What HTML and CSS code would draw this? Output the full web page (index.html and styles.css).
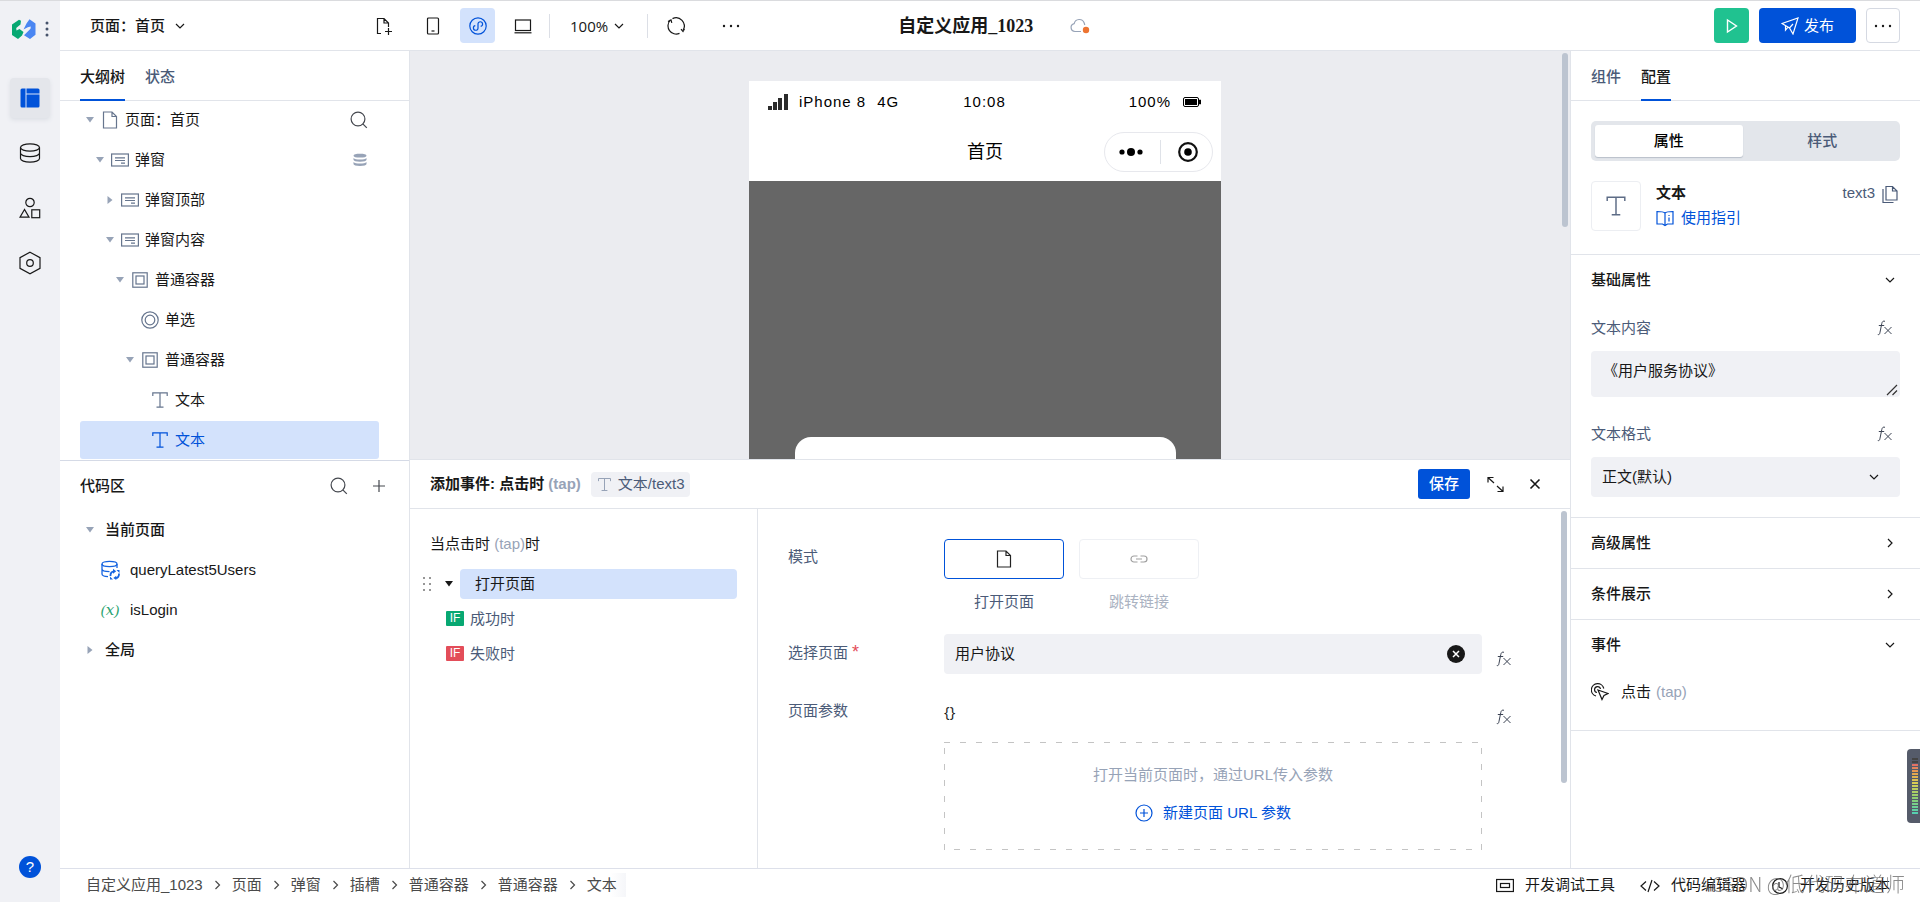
FILE: index.html
```
<!DOCTYPE html>
<html lang="zh-CN">
<head>
<meta charset="utf-8">
<title>自定义应用_1023</title>
<link rel="stylesheet" href="styles.css">
</head>
<body>
<svg class="sprite" aria-hidden="true">
  <symbol id="chev-down" viewBox="0 0 10 10"><path d="M1 3l4 4 4-4"/></symbol>
  <symbol id="chev-right" viewBox="0 0 10 10"><path d="M3 1l4 4-4 4"/></symbol>
  <symbol id="tri-down" viewBox="0 0 8 8"><path class="solid" d="M0 1h8L4 6.500z"/></symbol>
  <symbol id="tri-right" viewBox="0 0 8 8"><path class="solid" d="M1.500 0v8L6.500 4z"/></symbol>
  <symbol id="page" viewBox="0 0 18 18"><path d="M2.500 1h8.500l4.500 4.500V17h-13zM11 1v4.500h4.500"/></symbol>
  <symbol id="page-plus" viewBox="0 0 18 18"><path d="M6 16.500H2.500V1.500h6.500l4.500 4.500v4M9 1.500V6h4.500M10 14.500h7M13.500 11v7"/></symbol>
  <symbol id="search" viewBox="0 0 18 18"><circle cx="8" cy="8" r="6.900"/><path d="M12.800 12.800l4 4"/></symbol>
  <symbol id="panel" viewBox="0 0 18 18"><rect x=".6" y="3" width="16.800" height="12"/><path d="M4 6.800h10M4 9.500h10M10 12.200h4"/></symbol>
  <symbol id="box" viewBox="0 0 18 18"><rect x="1.800" y="1.800" width="14.400" height="14.400"/><rect x="5" y="5" width="8" height="8"/></symbol>
  <symbol id="radio" viewBox="0 0 18 18"><circle cx="9" cy="9" r="8.200"/><circle cx="9" cy="9" r="4.800"/></symbol>
  <symbol id="text" viewBox="0 0 18 18"><path d="M1.800 5V1.800h14.400V5M9 1.800v14.400M5.500 16.200h7"/></symbol>
  <symbol id="stack" viewBox="0 0 14 14"><path class="solid" d="M.5 2.700C.5 1.400 3 .8 7 .8s6.500.6 6.500 1.900S11 4.600 7 4.600.5 4 .5 2.700zM.5 5c1 1.100 3.300 1.500 6.500 1.500S12.500 6.100 13.500 5v1.800c0 1.300-2.500 2-6.500 2s-6.500-.7-6.500-2zM.5 9.100c1 1.100 3.300 1.500 6.500 1.500s5.500-.4 6.500-1.500V11c0 1.300-2.500 2-6.500 2s-6.500-.7-6.500-2z"/></symbol>
  <symbol id="dots" viewBox="0 0 18 18"><g class="solid"><circle cx="2" cy="9" r="1.200"/><circle cx="9" cy="9" r="1.200"/><circle cx="16" cy="9" r="1.200"/></g></symbol>
  <symbol id="fx" viewBox="0 0 16 16"><path d="M8 1.300c-1.800-.7-2.800.3-3.200 2.200L2.900 12.800c-.3 1.500-.9 2.100-2.100 1.700M1.800 5.500h5.400M7.500 7l7 7M14.500 7l-7 7"/></symbol>
</svg>
<div class="app">
  <nav class="rail" aria-label="主导航">
    <div class="brand">
      <svg width="24" height="20" viewBox="0 0 24 20"><path fill="#07a872" d="M0 5.500L7 .8l2 1-.5 3.700L4.200 9l.3 2.500 3-1.500 4 3-1.500 3.500L6 20l-6-4z"/><path fill="#4a86f2" d="M17.500.2L23.500 4.500v11.200L18 20l-6-3.800 6.500-6.500.3-2.200-3 .8-4.300 2.200 3-6z"/></svg>
      <svg width="4" height="18" viewBox="0 0 4 18"><g fill="#46536b"><circle cx="2" cy="3" r="1.500"/><circle cx="2" cy="9" r="1.500"/><circle cx="2" cy="15" r="1.500"/></g></svg>
    </div>
    <button class="rail-btn active" aria-label="页面"><svg width="20" height="20" viewBox="0 0 20 20"><rect x=".5" y=".5" width="19" height="19" rx="1.500" fill="#0052d9"/><path d="M6 0v20M6 6h14" stroke="#d5e1f8"/></svg></button>
    <button class="rail-btn" aria-label="数据"><svg class="ico" width="22" height="20" viewBox="0 0 22 20"><ellipse cx="11" cy="4.500" rx="9.500" ry="3.700"/><path d="M1.500 4.500v11c0 2 4.200 3.700 9.500 3.700s9.500-1.700 9.500-3.700v-11M1.500 10c0 2 4.200 3.700 9.500 3.700s9.500-1.700 9.500-3.700"/></svg></button>
    <button class="rail-btn" aria-label="组件"><svg class="ico" width="22" height="22" viewBox="0 0 22 22"><circle cx="11" cy="5.500" r="4.200"/><path d="M5.500 12.500L1 20.200h9z"/><rect x="12.800" y="12.800" width="7.900" height="7.900"/></svg></button>
    <button class="rail-btn" aria-label="设置"><svg class="ico" width="22" height="24" viewBox="0 0 22 24"><path d="M11 1.200l10 5.400v10.800l-10 5.400-10-5.400V6.600z"/><circle cx="11" cy="12" r="3.300"/></svg></button>
    <button class="help" aria-label="帮助">?</button>
  </nav>

  <div class="main">
    <header class="topbar">
      <button class="page-select">页面：首页<svg class="ico" width="10" height="10"><use href="#chev-down"/></svg></button>
      <div class="tools devices">
        <button class="tool" aria-label="新建页面"><svg class="ico" width="18" height="18"><use href="#page-plus"/></svg></button>
        <button class="tool" aria-label="手机"><svg class="ico" width="18" height="18" viewBox="0 0 18 18"><rect x="3.500" y="1" width="11" height="16" rx="1"/><path d="M7.500 14h3"/></svg></button>
        <button class="tool on" aria-label="小程序"><svg class="ico" width="18" height="18" viewBox="0 0 18 18"><circle cx="9" cy="9" r="8.200"/><path d="M6.300 8.700a2.300 2.300 0 1 0 2.700 2.500V6.800a2.300 2.300 0 1 1 2.700 2.500"/></svg></button>
        <button class="tool" aria-label="电脑"><svg class="ico" width="18" height="18" viewBox="0 0 18 18"><rect x="1.500" y="3" width="15" height="10.500"/><path d="M.5 15.800h17"/></svg></button>
      </div>
      <span class="rule"></span>
      <button class="zoom">100%<svg class="ico" width="10" height="10"><use href="#chev-down"/></svg></button>
      <span class="rule"></span>
      <div class="tools late">
        <button class="tool" aria-label="刷新"><svg class="ico" width="18" height="18" viewBox="0 0 18 18"><path d="M5.500 1.600A8.200 8.200 0 0 1 16.200 13M12.500 16.400A8.200 8.200 0 0 1 3.300 3.200M17.500 12l-1.500 2.500-2-2.300M1 4.500l3-1.700.8 3"/></svg></button>
        <button class="tool" aria-label="更多"><svg class="ico" width="18" height="18"><use href="#dots"/></svg></button>
      </div>
      <h1 class="title">自定义应用_1023</h1>
      <svg class="cloud" width="20" height="16" viewBox="0 0 20 16"><path d="M11 13.500H5a4 4 0 0 1-.8-7.900A5.200 5.200 0 0 1 14.200 5l.6 2" fill="none" stroke="#97a3b7" stroke-width="1.200"/><circle cx="16" cy="12" r="3.200" fill="#ed7431"/></svg>
      <div class="actions">
        <button class="play" aria-label="预览"><svg width="12" height="16" viewBox="0 0 12 16"><path d="M1.500 2v12L10.500 8z" fill="none" stroke="#fff" stroke-width="1.400"/></svg></button>
        <button class="publish"><svg width="18" height="18" viewBox="0 0 18 18"><path d="M1 6.500L17 1l-5 16-3.500-6zM1 6.500L8.500 11 12 7M4.500 8.700v4.500l2.500-3" fill="none" stroke="#fff" stroke-width="1.200"/></svg>发布</button>
        <button class="more" aria-label="更多操作"><svg class="ico" width="18" height="18"><use href="#dots"/></svg></button>
      </div>
    </header>

    <div class="workspace">
      <aside class="left">
        <div class="tabs" role="tablist"><button class="tab current" role="tab">大纲树</button><button class="tab" role="tab">状态</button></div>
        <ul class="tree">
          <li class="node l0"><svg class="tri"><use href="#tri-down"/></svg><svg class="ico nico"><use href="#page"/></svg>页面：首页<svg class="ico find" width="18" height="18"><use href="#search"/></svg></li>
          <li class="node l1"><svg class="tri"><use href="#tri-down"/></svg><svg class="ico nico"><use href="#panel"/></svg>弹窗<svg class="db" width="14" height="14"><use href="#stack"/></svg></li>
          <li class="node l2"><svg class="tri"><use href="#tri-right"/></svg><svg class="ico nico"><use href="#panel"/></svg>弹窗顶部</li>
          <li class="node l2"><svg class="tri"><use href="#tri-down"/></svg><svg class="ico nico"><use href="#panel"/></svg>弹窗内容</li>
          <li class="node l3"><svg class="tri"><use href="#tri-down"/></svg><svg class="ico nico"><use href="#box"/></svg>普通容器</li>
          <li class="node l4"><span class="tri"></span><svg class="ico nico"><use href="#radio"/></svg>单选</li>
          <li class="node l4"><svg class="tri"><use href="#tri-down"/></svg><svg class="ico nico"><use href="#box"/></svg>普通容器</li>
          <li class="node l5"><span class="tri"></span><svg class="ico nico"><use href="#text"/></svg>文本</li>
          <li class="node l5 selected"><span class="tri"></span><svg class="ico nico"><use href="#text"/></svg>文本</li>
        </ul>
        <section class="code">
          <div class="code-head"><h2>代码区</h2>
            <button class="bare" aria-label="搜索"><svg class="ico grey" width="18" height="18"><use href="#search"/></svg></button>
            <button class="bare" aria-label="新增"><svg class="ico grey" width="12" height="12" viewBox="0 0 12 12"><path d="M6 0v12M0 6h12"/></svg></button>
          </div>
          <ul class="code-list">
            <li class="group"><svg class="tri"><use href="#tri-down"/></svg>当前页面</li>
            <li class="entry"><svg width="20" height="20" viewBox="0 0 20 20" fill="none" stroke="#1664e0" stroke-width="1.300"><ellipse cx="9.500" cy="4" rx="7.500" ry="2.600"/><path d="M2 4v10c0 1.400 2.500 2.500 6 2.600M17 4v4M2 9c0 1.500 2.500 2.600 7.500 2.600"/><path d="M10.500 16c-.2-2.800 1.200-4.700 3.500-4.700M19 13.500c.2 2.800-1.200 4.700-3.500 4.700" stroke-width="1.800"/><path d="M13 8.800v5l3.200-2.500zM16.300 15.800v4.200l-3-2zM16.500 10h3v3zM10 16.500v3h3z" fill="#1664e0" stroke="none"/></svg>queryLatest5Users</li>
            <li class="entry"><span class="var"><i>(𝑥)</i></span>isLogin</li>
            <li class="group"><svg class="tri"><use href="#tri-right"/></svg>全局</li>
          </ul>
        </section>
      </aside>

      <main class="center">
        <div class="canvas">
          <div class="phone">
            <div class="status">
              <span class="carrier"><svg width="20" height="16" viewBox="0 0 20 16"><path fill="#2b2b2b" d="M0 12h4v4H0zM5 8h4v8H5zM10 4h4v12h-4zM16 0h4v16h-4z"/></svg>iPhone 8<span>4G</span></span>
              <span>10:08</span>
              <span class="power">100%<svg width="18" height="10" viewBox="0 0 18 10"><rect x=".5" y=".5" width="15" height="9" rx="1.500" fill="none" stroke="#000"/><path d="M2 2h12v6H2zM16 2.700h2v4.600h-2z"/></svg></span>
            </div>
            <div class="navbar"><span class="nav-title">首页</span>
              <div class="capsule"><svg width="24" height="10" viewBox="0 0 24 10"><circle cx="3" cy="5" r="2.600"/><circle cx="12" cy="5" r="4"/><circle cx="21" cy="5" r="2.600"/></svg><svg width="20" height="20" viewBox="0 0 20 20"><circle cx="10" cy="10" r="8.800" fill="none" stroke="#111" stroke-width="2.200"/><circle cx="10" cy="10" r="3.800"/></svg></div>
            </div>
            <div class="mask"><div class="sheet"></div></div>
          </div>
          <span class="thumb thumb-canvas"></span>
        </div>

        <section class="events">
          <div class="events-head">
            <h2>添加事件: 点击时 <span class="soft">(tap)</span></h2>
            <span class="tag"><svg class="ico" width="15" height="15"><use href="#text"/></svg>文本/text3</span>
            <button class="save">保存</button>
            <button class="bare expand" aria-label="展开"><svg class="ico" width="17" height="17" viewBox="0 0 17 17"><path d="M1 6.500V1.500h5.500M1 1.500l6 5.500M10.500 15.500H16v-5M16 15.500l-6-5.500"/></svg></button>
            <button class="bare close" aria-label="关闭"><svg class="ico strong" width="12" height="12" viewBox="0 0 12 12"><path d="M1.500 1.500l9 9M10.500 1.500l-9 9"/></svg></button>
          </div>
          <div class="events-body">
            <div class="flow">
              <p class="when">当点击时 <span class="soft">(tap)</span>时</p>
              <div class="step"><svg class="grip" width="9" height="16" viewBox="0 0 9 16"><path d="M0 1h2v2H0zM6 1h2v2H6zM0 7h2v2H0zM6 7h2v2H6zM0 13h2v2H0zM6 13h2v2H6z"/></svg><svg class="tri dark"><use href="#tri-down"/></svg><button class="step-name">打开页面</button></div>
              <div class="branch"><span class="if ok">IF</span>成功时</div>
              <div class="branch"><span class="if bad">IF</span>失败时</div>
            </div>
            <form class="form">
              <div class="row modes"><span class="label">模式</span>
                <div class="mode-list">
                  <div class="mode picked"><button type="button" class="mode-box" aria-labelledby="m1"><svg class="ico" width="18" height="18"><use href="#page"/></svg></button><span id="m1">打开页面</span></div>
                  <div class="mode off"><button type="button" class="mode-box" aria-labelledby="m2" disabled><svg class="ico" width="18" height="10" viewBox="0 0 18 10"><path d="M7.500 8H4a3 3 0 0 1 0-6h3.500M10.500 2H14a3 3 0 0 1 0 6h-3.500M6 5h6"/></svg></button><span id="m2">跳转链接</span></div>
                </div>
              </div>
              <div class="row pick"><label class="label" for="target">选择页面<span class="star">*</span></label>
                <div class="field"><input id="target" value="用户协议"><button type="button" class="bare" aria-label="清除"><svg width="18" height="18" viewBox="0 0 18 18"><circle cx="9" cy="9" r="9" fill="#181818"/><path d="M6 6l6 6M12 6l-6 6" stroke="#fff" stroke-width="1.500"/></svg></button></div>
                <svg class="ico fx"><use href="#fx"/></svg>
              </div>
              <div class="row args"><span class="label">页面参数</span><span class="value">{}</span><svg class="ico fx"><use href="#fx"/></svg></div>
              <div class="drop">
                <svg class="dash" width="100%" height="100%"><rect x="0" y="0" width="100%" height="100%" fill="none" stroke="#c4c4c4" stroke-width="2" stroke-dasharray="6 10"/></svg>
                <p>打开当前页面时，通过URL传入参数</p>
                <a href="#"><svg class="ico" width="18" height="18" viewBox="0 0 18 18"><circle cx="9" cy="9" r="8"/><path d="M9 5v8M5 9h8"/></svg>新建页面 URL 参数</a>
              </div>
            </form>
            <span class="thumb thumb-form"></span>
          </div>
        </section>
      </main>

      <aside class="right">
        <div class="tabs" role="tablist"><button class="tab" role="tab">组件</button><button class="tab current" role="tab">配置</button></div>
        <div class="intro">
          <div class="segment"><button class="seg on">属性</button><button class="seg">样式</button></div>
          <div class="card">
            <span class="card-icon"><svg class="ico" width="22" height="22"><use href="#text"/></svg></span>
            <div class="card-text"><strong>文本</strong><a href="#"><svg class="ico" width="18" height="18" viewBox="0 0 18 18"><path d="M9 4v12M9 4C7.500 2.500 6 2.500 1 2.500V15h5.500L9 16.500 11.500 15H17V2.500c-5 0-6.500 0-8 1.500zM13 6v1M13 8.500v4"/></svg>使用指引</a></div>
            <span class="card-id">text3</span>
            <button class="bare copy" aria-label="复制"><svg class="ico" width="18" height="18" viewBox="0 0 18 18"><path d="M5 1.500h6.500l4.500 4.500v9H5zM11.500 1.500V6H16M2 4v13.500h10.500"/></svg></button>
          </div>
        </div>
        <section class="fold basic">
          <h3>基础属性<svg class="ico" width="10" height="10"><use href="#chev-down"/></svg></h3>
          <div class="prop"><label for="content">文本内容</label><svg class="ico fx"><use href="#fx"/></svg></div>
          <div class="area"><textarea id="content">《用户服务协议》</textarea><svg class="ico resize" width="12" height="12" viewBox="0 0 12 12"><path d="M1 11L11 1M6.500 11L11 6.500"/></svg></div>
          <div class="prop second"><label for="format">文本格式</label><svg class="ico fx"><use href="#fx"/></svg></div>
          <div class="select-wrap"><select id="format"><option>正文(默认)</option></select><svg class="ico" width="10" height="10"><use href="#chev-down"/></svg></div>
        </section>
        <section class="fold"><h3>高级属性<svg class="ico" width="10" height="10"><use href="#chev-right"/></svg></h3></section>
        <section class="fold"><h3>条件展示<svg class="ico" width="10" height="10"><use href="#chev-right"/></svg></h3></section>
        <section class="fold last"><h3>事件<svg class="ico" width="10" height="10"><use href="#chev-down"/></svg></h3>
          <div class="tap"><svg class="ico" width="18" height="18" viewBox="0 0 18 18"><path d="M5 13A6.300 6.300 0 1 1 12.800 5.500M6 9.500A3 3 0 1 1 9.500 6M7 7l10 3.500-4 2-2 4z"/></svg>点击 <span class="soft">(tap)</span></div>
        </section>
      </aside>
    </div>

    <footer class="foot">
      <nav class="crumbs" aria-label="路径">
        <a href="#">自定义应用_1023</a><svg class="ico" width="11" height="10"><use href="#chev-right"/></svg><a href="#">页面</a><svg class="ico" width="11" height="10"><use href="#chev-right"/></svg><a href="#">弹窗</a><svg class="ico" width="11" height="10"><use href="#chev-right"/></svg><a href="#">插槽</a><svg class="ico" width="11" height="10"><use href="#chev-right"/></svg><a href="#">普通容器</a><svg class="ico" width="11" height="10"><use href="#chev-right"/></svg><a href="#">普通容器</a><svg class="ico" width="11" height="10"><use href="#chev-right"/></svg><a href="#" class="here">文本</a>
      </nav>
      <button class="foot-btn"><svg class="ico" width="18" height="18" viewBox="0 0 18 18"><rect x=".6" y="3.500" width="16.800" height="12"/><rect x="4.500" y="7.500" width="9" height="4"/></svg>开发调试工具</button>
      <button class="foot-btn"><svg class="ico" width="20" height="18" viewBox="0 0 20 18"><path d="M6 5.500L1 10l5 4.500M14 5.500l5 4.500-5 4.500M12 4L8 16"/></svg>代码编辑器</button>
      <button class="foot-btn"><svg class="ico" width="18" height="18" viewBox="0 0 18 18"><circle cx="9" cy="10" r="7.400"/><path d="M8 6v5l4 2"/></svg>开发历史版本</button>
    </footer>
  </div>
</div>
<span class="mark">CSDN @低代码布道师</span>
<div class="meter"><span></span></div>
</body>
</html>
```
FILE: styles.css
```
* { box-sizing: border-box; }
body, h1, h2, h3, p, ul { margin: 0; padding: 0; }
body {
  --line: #e1e4ea;
  --blue: #0052d9;
  --pale: #d3e2fc;
  --field: #f0f1f5;
  --muted: #4b5b78;
  --soft: #97a3b7;
  --ink: #181818;
  background: #fff;
  color: var(--ink);
  font: 15px/24px "Liberation Sans", "Noto Sans CJK SC", sans-serif;
}
ul { list-style: none; }
button, input, select, textarea { font: inherit; color: inherit; border: 0; padding: 0; margin: 0; background: none; }
a { color: inherit; text-decoration: none; }
svg { flex: none; display: block; }
.sprite { position: absolute; width: 0; height: 0; }
.ico { fill: none; stroke: currentColor; stroke-width: 1.2; }
.ico.strong { stroke-width: 1.6; }
.grey { color: #45484f; }
.solid { fill: currentColor; stroke: none; }
.soft { color: var(--soft); }
.bare { display: flex; align-items: center; justify-content: center; }
.tri { width: 8px; height: 8px; flex: none; color: var(--soft); }
.tri.dark { color: var(--ink); }
.fx { width: 16px; height: 16px; color: #3c4454; stroke-width: 1; }

.app { display: flex; height: 100vh; border-top: 1px solid #dadbde; }
.rail { width: 60px; flex: none; background: var(--field); display: flex; flex-direction: column; align-items: center; gap: 15px; padding-bottom: 24px; }
.brand { width: 100%; display: flex; align-items: center; gap: 9px; padding: 18px 0 0 12px; height: 38px; margin-bottom: 24px; }
.rail-btn { width: 40px; height: 40px; display: flex; align-items: center; justify-content: center; border-radius: 4px; }
.rail-btn.active { background: #e4e6eb; box-shadow: 0 2px 4px #dcdfe5; }
.help { margin-top: auto; width: 22px; height: 22px; border-radius: 50%; background: var(--blue); color: #fff; line-height: 22px; }

.main { flex: 1; min-width: 0; display: flex; flex-direction: column; }
.topbar { flex: none; height: 50px; border-bottom: 1px solid var(--line); display: flex; align-items: center; padding: 0 20px 0 30px; }
.page-select { width: 276px; display: flex; align-items: center; gap: 10px; font-weight: 500; }
.tools { display: flex; gap: 10px; }
.devices .tool:first-child { margin-right: 4px; }
.tool { width: 35px; height: 35px; border-radius: 4px; display: flex; align-items: center; justify-content: center; }
.tool.on { background: var(--pale); color: var(--blue); }
.rule { width: 1px; height: 24px; background: #dcdfe6; margin-left: 9px; }
.zoom { display: flex; align-items: center; gap: 6px; margin: 0 14px 0 20px; font-family: "Open Sans", sans-serif; }
.tools.late { margin-left: 10px; gap: 20px; }
.title { margin: 0 37px 0 150px; font: 600 18px/24px "Liberation Serif", "Noto Sans CJK SC", serif; white-space: nowrap; }
.actions { margin-left: auto; display: flex; gap: 10px; }
.actions button { height: 35px; border-radius: 4px; display: flex; align-items: center; justify-content: center; }
.actions .play { width: 35px; background: #20c290; }
.actions .publish { width: 97px; gap: 5px; background: var(--blue); color: #fff; }
.actions .more { width: 34px; border: 1px solid #d5d9e2; }

.workspace { flex: 1; min-height: 0; display: flex; }
.left { width: 350px; flex: none; border-right: 1px solid var(--line); display: flex; flex-direction: column; }
.tabs { flex: none; height: 50px; display: flex; gap: 20px; padding-left: 20px; border-bottom: 1px solid var(--line); }
.tab { height: 50px; padding-top: 3px; color: var(--muted); font-weight: 500; border-bottom: 2px solid transparent; }
.tab.current { color: var(--ink); border-color: var(--blue); }
.tree { flex: 1; min-height: 0; overflow: hidden; padding: 0 30px 2px 20px; }
.node { height: 38px; margin-bottom: 2px; display: flex; align-items: center; border-radius: 3px; }
.nico { width: 18px; height: 18px; margin: 0 6px 0 7px; color: #66758e; }
.l0 { padding-left: 6px; }
.l1 { padding-left: 16px; }
.l2 { padding-left: 26px; }
.l3 { padding-left: 36px; }
.l4 { padding-left: 46px; }
.l5 { padding-left: 56px; }
.selected { background: var(--pale); color: var(--blue); }
.selected .nico { color: var(--blue); }
.find { margin-left: auto; margin-right: 11px; color: #45484f; }
.db { margin-left: auto; margin-right: 12px; color: var(--soft); }

.code { flex: 0 0 408px; border-top: 1px solid #d5dae6; padding: 0 20px; }
.code-head { height: 49px; display: flex; align-items: center; gap: 25px; padding-right: 4px; }
.code-head h2 { flex: 1; font-size: 15px; font-weight: 500; }
.code-list li { height: 40px; display: flex; align-items: center; }
.code-list .group { padding-left: 6px; gap: 11px; font-weight: 500; }
.code-list .entry { padding-left: 20px; gap: 10px; }
.var { width: 20px; text-align: center; color: #2ba471; font-family: "Liberation Serif", "DejaVu Serif", serif; }

.center { flex: 1; min-width: 0; display: flex; flex-direction: column; }
.canvas { position: relative; flex: 1; min-height: 0; overflow: hidden; background: #ebecf0; padding-top: 30px; display: flex; justify-content: center; }
.phone { width: 472px; margin-right: 10px; display: flex; flex-direction: column; background: #fff; color: #000; }
.status { height: 41px; display: grid; grid-template-columns: 1fr auto 1fr; align-items: center; padding: 1px 20px 0 19px; letter-spacing: 1px; }
.carrier { display: flex; align-items: center; gap: 11px; }
.power { display: flex; align-items: center; justify-content: flex-end; gap: 12px; }
.navbar { height: 59px; display: grid; grid-template-columns: 1fr auto 1fr; align-items: center; }
.nav-title { grid-column: 2; font-size: 18px; }
.capsule { justify-self: end; margin-right: 8px; width: 109px; height: 40px; border: 1px solid #e7e8ed; border-radius: 20px; display: flex; align-items: center; justify-content: space-between; padding: 0 14px; background: linear-gradient(#dfe2e8, #dfe2e8) 55px center / 1px 24px no-repeat; }
.mask { flex: 1; background: #666; padding: 256px 45px 0 46px; overflow: hidden; }
.sheet { height: 100px; background: #fff; border-radius: 16px 16px 0 0; }
.thumb { position: absolute; width: 6px; border-radius: 3px; background: #bcc4d0; }
.thumb-canvas { top: 2px; right: 2px; height: 174px; }

.events { flex: 0 0 409px; display: flex; flex-direction: column; border-top: 1px solid var(--line); }
.events-head { flex: none; height: 49px; display: flex; align-items: center; padding: 0 29px 0 20px; border-bottom: 1px solid var(--line); }
.events-head h2 { font-size: 15px; font-weight: 600; margin-right: 10px; }
.tag { height: 25px; display: flex; align-items: center; gap: 6px; padding: 0 5px 0 6px; border-radius: 4px; background: var(--field); color: var(--muted); }
.tag svg { color: var(--soft); }
.save { margin-left: auto; width: 52px; height: 30px; border-radius: 3px; background: var(--blue); color: #fff; font-weight: 500; }
.expand { margin: 0 25px 0 17px; }
.events-body { position: relative; flex: 1; min-height: 0; display: flex; }
.flow { flex: 0 0 348px; border-right: 1px solid var(--line); padding: 23px 20px 0 13px; }
.when { padding-left: 7px; margin-bottom: 13px; }
.step { display: flex; align-items: center; }
.grip { fill: #979797; margin-right: 13px; }
.step-name { flex: 1; height: 30px; margin-left: 7px; padding-left: 15px; border-radius: 4px; background: var(--pale); text-align: left; }
.branch { display: flex; align-items: center; gap: 6px; height: 35px; padding-left: 23px; color: var(--muted); }
.step + .branch { margin-top: 2px; }
.if { width: 18px; height: 15px; border-radius: 1px; color: #fff; font-size: 12px; line-height: 15px; text-align: center; }
.ok { background: #07a872; }
.bad { background: #e34d59; }
.form { flex: 1; min-width: 0; padding: 30px 58px 0 30px; overflow: hidden; }
.row { display: grid; grid-template-columns: 156px 1fr 16px; column-gap: 0; }
.row .fx { justify-self: end; }
.row > :nth-child(2) { margin-right: 14px; }
.label { color: var(--muted); }
.star { color: #e34d59; margin-left: 4px; font-size: 18px; line-height: 20px; }
.modes { margin-bottom: 20px; }
.modes .label { padding-top: 6px; }
.mode-list { display: flex; gap: 15px; }
.mode { display: flex; flex-direction: column; align-items: center; gap: 11px; color: var(--muted); }
.mode-box { width: 120px; height: 40px; display: flex; align-items: center; justify-content: center; border: 1px solid #eef0f4; border-radius: 4px; color: #a0a0a0; }
.picked .mode-box { border-color: var(--blue); color: #222; }
.off { color: #aab2c1; }
.pick { margin-bottom: 25px; }
.pick .label { padding-top: 7px; }
.pick .fx { margin-top: 17px; }
.field { height: 40px; display: flex; align-items: center; padding: 0 17px 0 11px; background: var(--field); border-radius: 4px; }
.field input { flex: 1; min-width: 0; }
.args { margin-bottom: 17px; }
.args .fx { margin-top: 10px; }
.value { font-family: "Open Sans", sans-serif; }
.drop { position: relative; height: 108px; margin: 0 30px 0 156px; padding-top: 21px; text-align: center; }
.dash { position: absolute; inset: 0; }
.drop p { color: var(--soft); margin-bottom: 14px; }
.drop a { display: inline-flex; align-items: center; gap: 10px; color: var(--blue); }
.thumb-form { top: 2px; right: 3px; height: 272px; }

.right { width: 350px; flex: none; border-left: 1px solid var(--line); }
.intro { padding: 20px 20px 23px; border-bottom: 1px solid var(--line); }
.segment { height: 40px; padding: 4px; border-radius: 5px; background: #e3e6eb; display: flex; margin-bottom: 20px; }
.seg { flex: 1; color: var(--muted); font-weight: 500; border-radius: 3px; }
.seg.on { margin-right: 6px; background: #fff; color: #000; box-shadow: 0 1px 1px #b8bfca; }
.card { display: flex; align-items: flex-start; }
.card-icon { width: 50px; height: 50px; border: 1px solid #eceef2; border-radius: 4px; display: flex; align-items: center; justify-content: center; color: #5d6c86; margin-right: 15px; }
.card-text { flex: 1; display: flex; flex-direction: column; gap: 1px; }
.card-text strong { font-weight: 600; }
.card-text a { display: flex; align-items: center; gap: 7px; color: var(--blue); }
.card-id { color: var(--muted); }
.copy { color: var(--muted); margin: 4px 1px 0 6px; }
.fold { padding: 0 20px; border-bottom: 1px solid var(--line); }
.fold h3 { height: 50px; display: flex; align-items: center; justify-content: space-between; padding-right: 5px; font-size: 15px; font-weight: 500; }
.basic { padding-bottom: 20px; }
.prop { display: flex; align-items: center; justify-content: space-between; height: 24px; margin: 11px 0; padding-right: 7px; color: var(--muted); }
.prop.second { margin: 25px 0 11px; }
.area { position: relative; }
textarea { display: block; width: 100%; height: 46px; padding: 8px 12px; border-radius: 4px; background: var(--field); resize: none; overflow: hidden; }
.resize { position: absolute; right: 2px; bottom: 1px; color: #333; }
.select-wrap { display: flex; align-items: center; height: 40px; padding-right: 21px; border-radius: 4px; background: var(--field); }
select { flex: 1; height: 40px; padding-left: 11px; appearance: none; }
.last { padding-bottom: 16px; }
.tap { display: flex; align-items: center; height: 44px; }
.tap svg { margin-right: 12px; }
.tap .soft { margin-left: 5px; }

.foot { flex: none; height: 34px; border-top: 1px solid #dde0ea; display: flex; align-items: center; gap: 25px; padding: 0 30px 2px 26px; }
.crumbs { flex: 1; display: flex; align-items: center; gap: 9px; color: #4a4a4a; }
.here { padding-right: 9px; background: linear-gradient(90deg, #fff 60%, #f5f6f9); }
.foot-btn { display: flex; align-items: center; gap: 11px; }
.mark { position: fixed; right: 15px; bottom: 6px; font-family: "Noto Sans CJK SC", sans-serif; font-size: 20px; font-weight: 300; color: rgba(110, 110, 110, .8); pointer-events: none; }
.meter { position: fixed; right: 0; top: 749px; width: 13px; height: 74px; padding: 9px 2px 8px 5px; border-radius: 4px 0 0 4px; background: #555b6a; }
.meter span { display: block; height: 100%; background: repeating-linear-gradient(transparent 0 2px, #555b6a 2px 3px), linear-gradient(#444 8%, #e06a6a 10%, #e8a04e 25%, #d8cf55 45%, #8fcf70 70%, #4fd0b8); }
```
